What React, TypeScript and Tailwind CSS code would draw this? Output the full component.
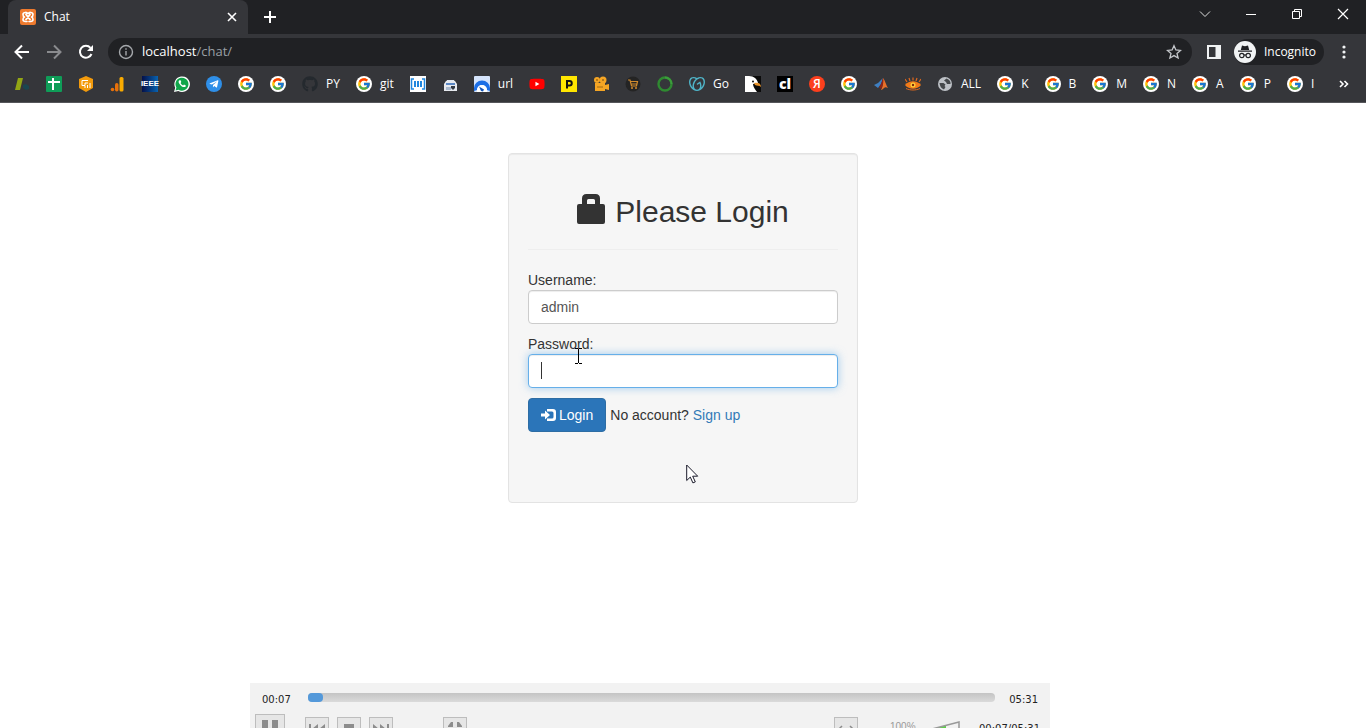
import React, { useState } from 'react'
import { FcGoogle } from 'react-icons/fc'
import { FaGithub, FaTelegramPlane, FaWhatsapp, FaYoutube } from 'react-icons/fa'
import { SiGodaddy } from 'react-icons/si'

function GoogleIcon() {
  return (
    <span className="flex size-4 items-center justify-center rounded-full bg-white">
      <FcGoogle className="size-3.5" />
    </span>
  )
}

function XamppIcon() {
  return (
    <svg viewBox="0 0 16 16" className="size-4">
      <rect width="16" height="16" rx="2" fill="#ee7a2e" />
      <g fill="none" stroke="#fff" strokeLinecap="round" strokeLinejoin="round">
        <path d="M5.500 3.500Q3 3.500 3 5.500T4.500 8Q3 8.500 3 10.500t2.500 2H7M10.500 3.500q2.500 0 2.500 2T11.500 8q1.500.5 1.500 2.500t-2.500 2H9" strokeWidth="1.600" />
        <path d="M6 5.500l4 5M10 5.500l-4 5M6 3.500q2 1.500 4 0" strokeWidth="1.800" />
      </g>
    </svg>
  )
}

function AdsIcon() {
  return (
    <svg viewBox="0 0 16 16" className="size-4">
      <path d="M4 2h5L6 14H1z" fill="#93a614" />
      <path d="M9 9l3-1 3 2v3l-3 1-3-2z" fill="#1b4650" />
    </svg>
  )
}

function SheetsIcon() {
  return (
    <svg viewBox="0 0 16 16" className="size-4">
      <rect width="16" height="16" rx="1" fill="#0f9d58" />
      <path d="M2 5h12v2H2zM6 2h2v12H6z" fill="#fff" />
    </svg>
  )
}

function HexIcon() {
  return (
    <svg viewBox="0 0 16 16" className="size-4">
      <path d="M8 0l7 3v9l-7 4-7-4V3z" fill="#f29a0c" />
      <path d="M10 4.500H4v5h3v-2.500h3M7 12v-2M9.500 12V9M12 12V7" fill="none" stroke="#fff" strokeWidth="1" />
    </svg>
  )
}

function AnalyticsIcon() {
  return (
    <svg viewBox="0 0 16 16" className="size-4">
      <circle cx="2.500" cy="13.500" r="1.800" fill="#e8710a" />
      <rect x="5" y="7" width="3.500" height="8.500" rx="1.700" fill="#e8710a" />
      <rect x="9.500" y="1" width="4" height="14.500" rx="1.500" fill="#f9ab00" />
    </svg>
  )
}

function IeeeIcon() {
  return (
    <span className="flex size-4 items-center justify-center bg-gradient-to-r from-[#04104a] to-[#0a63b0] font-['Liberation_Sans_Narrow','Liberation_Sans'] text-[8px] leading-none font-bold text-white">
      IEEE
    </span>
  )
}

function WhatsappIcon() {
  return (
    <svg viewBox="0 0 16 16" className="size-4">
      <path d="M0 16l1.200-4.200A7.800 7.800 0 1 1 4.300 15z" fill="#fff" />
      <path d="M1.500 14.500l.9-3A6.500 6.500 0 1 1 4.600 13.700z" fill="#10a64a" />
      <path d="M5.500 4.200c-1 .5-1.200 1.800-.3 3.300 1.400 2.500 3.500 3.800 5.300 3.600 1-.2 1.500-1 1.300-1.700L10 8.500l-.9 1C8 9 7 8 6.600 7l.7-.9-.7-1.900z" fill="#fff" />
    </svg>
  )
}

function TelegramIcon() {
  return (
    <span className="flex size-4 items-center justify-center rounded-full bg-[#2f8fe8]">
      <FaTelegramPlane className="size-2.5 text-white" />
    </span>
  )
}

function BarcodeIcon() {
  return (
    <svg viewBox="0 0 16 16" className="size-4">
      <rect width="16" height="16" fill="#fff" />
      <path d="M4 3H1.500v10H4M12 3h2.500v10H12" fill="none" stroke="#1f86de" strokeWidth="1.500" />
      <path d="M4 5h2v6H4zM7 5h2v6H7zM10 5h2v6h-2z" fill="#1f86de" />
    </svg>
  )
}

function PrinterIcon() {
  return (
    <svg viewBox="0 0 16 16" className="size-4">
      <path d="M5 6V4.500h7V6" fill="none" stroke="#dfe6ee" strokeWidth="1" />
      <path d="M4 5h9l2 3v7H2V8z" fill="#e6e9ee" />
      <path d="M4 7h9v2H4z" fill="#5a87c4" />
      <path d="M4 11h5v3H4z" fill="#a9b9cd" />
      <path d="M9 10h4v2l-2 2-2-2z" fill="#333a44" />
    </svg>
  )
}

function DialIcon() {
  return (
    <svg viewBox="0 0 16 16" className="size-4">
      <rect width="16" height="16" rx="1" fill="#d5e4fb" />
      <path d="M0 12a8 7.500 0 0 1 16 0v3l-3-1a5 5 0 0 0-10 0l-3 1z" fill="#1c6fe6" />
      <path d="M3 14a5 5 0 0 1 10 0v2H3z" fill="#fff" />
      <path d="M5 10.500l5 3-1 2-2-.5z" fill="#1556b8" />
    </svg>
  )
}

function YoutubeIcon() {
  return (
    <span className="relative flex size-4 items-center justify-center">
      <span className="absolute size-1.5 bg-white" />
      <FaYoutube className="relative size-4 text-[#f00]" />
    </span>
  )
}

function PIcon() {
  return (
    <svg viewBox="0 0 16 16" className="size-4">
      <rect width="16" height="16" fill="#ffe600" />
      <path d="M6 12.500V5h2.500a2 2 0 0 1 0 4.500H6" fill="none" stroke="#111" strokeWidth="2" />
    </svg>
  )
}

function CameraIcon() {
  return (
    <svg viewBox="0 0 16 16" className="size-4" fill="#f5a524">
      <circle cx="4" cy="4" r="3" />
      <circle cx="10" cy="4" r="3.500" />
      <path d="M2 7h10v2l4-1v6l-4-1v2H2z" />
      <circle cx="4" cy="4" r="1" fill="#a06a15" />
      <circle cx="10" cy="4" r="1" fill="#a06a15" />
      <path d="M4 11h6" stroke="#a06a15" />
    </svg>
  )
}

function CartIcon() {
  return (
    <svg viewBox="0 0 16 16" className="size-4">
      <circle cx="8" cy="8" r="7.500" fill="#242424" />
      <path d="M3 4h2l1.500 6h5l1-4.500H5.500M6 8h6" fill="none" stroke="#d08a2c" strokeWidth="1.200" />
      <circle cx="7" cy="12" r="1" fill="#d08a2c" />
      <circle cx="11" cy="12" r="1" fill="#d08a2c" />
    </svg>
  )
}

function RingIcon() {
  return (
    <svg viewBox="0 0 16 16" className="size-4">
      <circle cx="8" cy="8" r="6.500" fill="none" stroke="#2f8a31" strokeWidth="2.400" />
      <path d="M8 1.500a6.500 6.500 0 0 1 6.500 6.500" fill="none" stroke="#3c9d3c" strokeWidth="2" />
    </svg>
  )
}

function EagleIcon() {
  return (
    <svg viewBox="0 0 16 16" className="size-4">
      <rect width="16" height="16" fill="#0b0b0b" />
      <path d="M0 0h4c5 0 8 3 9 7l-5 1c0 3 2 5 4 8H0z" fill="#fff" />
      <path d="M9 7c4-1 7 0 7 4-2-2-4-1-6-2z" fill="#e8932b" />
      <circle cx="8" cy="5.500" r="1" fill="#111" />
    </svg>
  )
}

function ClIcon() {
  return (
    <span className="flex size-4 items-center justify-center bg-black font-['Open_Sans'] text-[14px] leading-none font-extrabold text-white">
      cl
    </span>
  )
}

function YandexIcon() {
  return (
    <span className="flex size-4 items-center justify-center rounded-full bg-[#fc3f1d] font-['Open_Sans'] text-xs leading-none font-semibold text-white">
      Я
    </span>
  )
}

function MatlabIcon() {
  return (
    <svg viewBox="0 0 16 16" className="size-4">
      <path d="M1 9l4-2 3-3 2-2-2 6-3 4z" fill="#3f7fc0" />
      <path d="M10 2c2 2 3 7 5 10-2-1-3-1-4 0-2 2-3 2-3 2 2-3 2-8 2-12z" fill="#e8702a" />
      <path d="M10 2c1 3 0 8-2 11l-2-2c2-2 3-6 4-9z" fill="#8e2517" />
    </svg>
  )
}

function EyeIcon() {
  return (
    <svg viewBox="0 0 16 16" className="size-4">
      <path d="M0 9c4-5 12-5 16 0-4 5-12 5-16 0z" fill="#f27a18" />
      <path d="M2 6L0 3M5 5L4 2M8 4.500V1.500M11 5l1-3M14 6l2-3" stroke="#e0691e" strokeWidth="1.200" />
      <circle cx="8" cy="9" r="2.500" fill="#ffd23c" />
      <circle cx="8" cy="9" r="1.200" fill="#7a2610" />
      <path d="M1 12.500c4 2 10 2 14 0" fill="none" stroke="#e0691e" />
    </svg>
  )
}

function GlobeIcon() {
  return (
    <svg viewBox="0 0 16 16" className="size-4">
      <circle cx="8" cy="8" r="7" fill="#bdc1c6" />
      <path d="M2.500 7h4l2 1.500-1 1.500 1 1-1.500 2.500q-4-1.500-4.500-6.500zM9.500 2.500L7 4.500l2 1.500 1 2h3.500q.5-4-4-5.500z" fill="#45484b" />
    </svg>
  )
}

const bookmarks: { icon: React.ReactNode; label?: string; name?: string }[] = [
  { icon: <AdsIcon />, name: 'Ads' },
  { icon: <SheetsIcon />, name: 'Sheets' },
  { icon: <HexIcon />, name: 'Dashboard' },
  { icon: <AnalyticsIcon />, name: 'Analytics' },
  { icon: <IeeeIcon />, name: 'IEEE' },
  { icon: <WhatsappIcon />, name: 'WhatsApp' },
  { icon: <TelegramIcon />, name: 'Telegram' },
  { icon: <GoogleIcon />, name: 'Google' },
  { icon: <GoogleIcon />, name: 'Google' },
  { icon: <FaGithub className="size-4 text-[#24292e]" />, label: 'PY' },
  { icon: <GoogleIcon />, label: 'git' },
  { icon: <BarcodeIcon />, name: 'Barcode' },
  { icon: <PrinterIcon />, name: 'Printer' },
  { icon: <DialIcon />, label: 'url' },
  { icon: <YoutubeIcon />, name: 'YouTube' },
  { icon: <PIcon />, name: 'P' },
  { icon: <CameraIcon />, name: 'Camera' },
  { icon: <CartIcon />, name: 'Cart' },
  { icon: <RingIcon />, name: 'Ring' },
  { icon: <SiGodaddy className="size-4 text-[#4fb4c8]" />, label: 'Go' },
  { icon: <EagleIcon />, name: 'Eagle' },
  { icon: <ClIcon />, name: 'cl' },
  { icon: <YandexIcon />, name: 'Yandex' },
  { icon: <GoogleIcon />, name: 'Google' },
  { icon: <MatlabIcon />, name: 'Matlab' },
  { icon: <EyeIcon />, name: 'Eye' },
  { icon: <GlobeIcon />, label: 'ALL' },
  { icon: <GoogleIcon />, label: 'K' },
  { icon: <GoogleIcon />, label: 'B' },
  { icon: <GoogleIcon />, label: 'M' },
  { icon: <GoogleIcon />, label: 'N' },
  { icon: <GoogleIcon />, label: 'A' },
  { icon: <GoogleIcon />, label: 'P' },
  { icon: <GoogleIcon />, label: 'I' },
]

function TabStrip() {
  return (
    <div className="flex h-[34px] bg-[#202124] pl-2">
      <div className="flex w-60 items-center rounded-t-lg bg-[#35363a] px-3">
        <XamppIcon />
        <span className="ml-2 flex-1 text-xs">Chat</span>
        <button aria-label="Close tab" className="-mr-1 flex size-4 items-center justify-center">
          <svg viewBox="0 0 16 16" className="size-4" stroke="currentColor" strokeWidth="1.600">
            <path d="M4 4l8 8M12 4l-8 8" />
          </svg>
        </button>
      </div>
      <button aria-label="New tab" className="flex w-11 items-center justify-center">
        <svg viewBox="0 0 12 12" className="size-3" stroke="#fff" strokeWidth="2">
          <path d="M6 0v12M0 6h12" />
        </svg>
      </button>
      <div className="ml-auto flex h-7">
        <button aria-label="Search tabs" className="flex w-[46px] items-center justify-center">
          <svg viewBox="0 0 12 12" className="size-3" fill="none" stroke="#ddd">
            <path d="M1 3.500l5 5 5-5" />
          </svg>
        </button>
        <button aria-label="Minimize" className="flex w-[46px] items-center justify-center">
          <svg viewBox="0 0 12 12" className="size-3" stroke="#fff">
            <path d="M1 6.500h10" />
          </svg>
        </button>
        <button aria-label="Restore" className="flex w-[46px] items-center justify-center">
          <svg viewBox="0 0 12 12" className="size-3" fill="none" stroke="#fff">
            <path d="M1.500 3.500h7v7h-7zM3.500 3.500v-2h7v7h-2" />
          </svg>
        </button>
        <button aria-label="Close" className="flex w-[46px] items-center justify-center">
          <svg viewBox="0 0 12 12" className="size-3" stroke="#fff" strokeWidth="1.200">
            <path d="M1 1l10 10M11 1L1 11" />
          </svg>
        </button>
      </div>
    </div>
  )
}

function Toolbar() {
  return (
    <div className="flex h-9 items-center px-3.5">
      <div className="flex gap-4">
        <button aria-label="Back">
          <svg viewBox="0 0 16 16" className="size-4" fill="none" stroke="#fff" strokeWidth="2">
            <path d="M15 8H2M8 1.500L1.500 8 8 14.500" />
          </svg>
        </button>
        <button aria-label="Forward">
          <svg viewBox="0 0 16 16" className="size-4" fill="none" stroke="#8a8b8e" strokeWidth="2">
            <path d="M1 8h13M8 1.500L14.500 8 8 14.500" />
          </svg>
        </button>
        <button aria-label="Reload">
          <svg viewBox="0 0 16 16" className="size-4" fill="none" stroke="#fff" strokeWidth="2">
            <path d="M13.500 10a6 6 0 1 1-1-6.200" />
            <path d="M15 1v6H9z" fill="#fff" stroke="none" />
          </svg>
        </button>
      </div>
      <div className="ml-3.5 flex h-7 flex-1 items-center rounded-full bg-[#202124] px-2.5">
        <svg viewBox="0 0 16 16" className="size-4" fill="none" stroke="#a5a8ac" strokeWidth="1.400">
          <circle cx="8" cy="8" r="6.500" />
          <path d="M8 7v4.500M8 4.200v1.500" />
        </svg>
        <span className="ml-2 flex-1 text-[13px] text-[#9aa0a6]">
          <span className="text-white">localhost</span>/chat/
        </span>
        <button aria-label="Bookmark this page">
          <svg viewBox="0 0 16 16" className="size-4" fill="none" stroke="#c4c7cb" strokeWidth="1.300">
            <path d="M8 1.700l1.900 4.300 4.600.4-3.500 3 1.100 4.600L8 11.600 3.900 14 5 9.400l-3.500-3 4.600-.4z" />
          </svg>
        </button>
      </div>
      <button aria-label="Side panel" className="ml-3.5">
        <svg viewBox="0 0 16 16" className="size-4">
          <path d="M1 1h14v14H1z" fill="#f1f3f4" />
          <path d="M3 3h6.500v10H3z" fill="#35363a" />
        </svg>
      </button>
      <button className="ml-3 flex h-[26px] items-center gap-2 rounded-full bg-[#202124] pr-2 text-xs">
        <svg viewBox="0 0 22 22" className="size-[22px]">
          <circle cx="11" cy="11" r="11" fill="#f1f3f4" />
          <path d="M8 4.500l3 .7 3-.7 1.200 4.500H6.800zM4 9.500h14v1.200H4z" fill="#202124" />
          <g fill="none" stroke="#202124" strokeWidth="1.200">
            <circle cx="7.800" cy="14.500" r="2.200" />
            <circle cx="14.200" cy="14.500" r="2.200" />
            <path d="M10 14.200q1-.8 2 0" />
          </g>
        </svg>
        Incognito
      </button>
      <button aria-label="Menu" className="ml-3">
        <svg viewBox="0 0 16 16" className="size-4" fill="#f1f3f4">
          <circle cx="8" cy="3" r="1.600" />
          <circle cx="8" cy="8" r="1.600" />
          <circle cx="8" cy="13" r="1.600" />
        </svg>
      </button>
    </div>
  )
}

function BookmarksBar() {
  return (
    <div className="flex h-[33px] items-center gap-4 border-b border-[#55565a] px-4 pb-1 pl-3.5 text-xs">
      {bookmarks.map((b, i) => (
        <a key={i} href="#" aria-label={b.label ?? b.name} className="flex shrink-0 items-center gap-2">
          {b.icon}
          {b.label && <span>{b.label}</span>}
        </a>
      ))}
      <button aria-label="More bookmarks" className="ml-auto">
        <svg viewBox="0 0 12 12" className="size-3" fill="none" stroke="#fff" strokeWidth="1.600">
          <path d="M2 3l3 3-3 3M6.500 3l3 3-3 3" />
        </svg>
      </button>
    </div>
  )
}

function LoginCard() {
  const [username, setUsername] = useState('admin')
  const [password, setPassword] = useState('')

  return (
    <form
      onSubmit={(e) => e.preventDefault()}
      className="relative mx-auto mt-[50px] h-[350px] w-[350px] rounded-sm border border-[#e3e3e3] bg-[#f6f6f6] p-[19px] text-sm leading-5 text-[#333] shadow-[inset_0_1px_1px_rgba(0,0,0,0.05)]"
    >
      <h2 className="mt-[21px] flex h-9 items-center justify-center gap-2.5 text-[30px] leading-9">
        <svg viewBox="0 0 28 30" className="mb-1.5 h-[30px] w-7" fill="#333">
          <path d="M2 10h3V4.500Q5 0 9.500 0h9Q23 0 23 4.500V10h3q2 0 2 2v16q0 2-2 2H2q-2 0-2-2V12q0-2 2-2zm8 0h8V6.500Q18 5 16.500 5h-5Q10 5 10 6.500z" />
        </svg>
        Please Login
      </h2>
      <hr className="mt-[19px] mb-5 border-[#eee]" />

      <label htmlFor="username" className="block">Username:</label>
      <input
        id="username"
        value={username}
        onChange={(e) => setUsername(e.target.value)}
        className="block h-[34px] w-full rounded-sm border border-[#ccc] bg-white px-3 text-[#555] shadow-[inset_0_1px_1px_rgba(0,0,0,0.075)] outline-none"
      />

      <label htmlFor="password" className="mt-2.5 block">Password:</label>
      <div className="relative">
        <input
          id="password"
          type="password"
          value={password}
          onChange={(e) => setPassword(e.target.value)}
          className="block h-[34px] w-full rounded-sm border border-[#66afe9] bg-white px-3 text-[#555] caret-transparent shadow-[inset_0_1px_1px_rgba(0,0,0,0.075),0_0_8px_rgba(102,175,233,0.6)] outline-none"
        />
        <span className="absolute top-2 left-[13px] h-[17px] w-px bg-[#333]" />
        <svg viewBox="0 0 9 18" className="absolute -top-1.5 left-[46px] h-[18px] w-[9px]" fill="none" stroke="#000">
          <path d="M1 .5h3M5 .5h3M4.500 1v14M1 15.500h3M5 15.500h3" />
        </svg>
      </div>

      <div className="mt-2.5 flex items-center gap-1">
        <button className="flex h-[34px] items-center gap-[3px] rounded-sm border border-[#2e6da4] bg-[#2b75b9] px-3 text-white">
          <svg viewBox="0 0 15 14" className="h-3.5 w-[15px]" fill="#fff">
            <path d="M0 5.500h4V2.500L9 7l-5 4.500v-3H0zM6 1h6q3 0 3 3v6q0 3-3 3H6v-2.500h5q1.500 0 1.500-1.500V5q0-1.500-1.500-1.500H6z" />
          </svg>
          Login
        </button>
        <span>
          No account? <a href="#" className="text-[#337ab7]">Sign up</a>
        </span>
      </div>

      <svg viewBox="0 0 13 20" className="absolute top-[310px] left-[177px] h-5 w-[13px]" fill="#fff" stroke="#1a1a2a">
        <path d="M.7 1v15.500l3.600-3.400 2.600 5.800 2.400-1-2.600-5.700h5z" />
      </svg>
    </form>
  )
}

const playerButton = 'flex h-6 w-6 items-center justify-center border border-[#bdbdbd] bg-[#e6e6e6]'

function Player() {
  return (
    <div className="ml-[250px] h-[45px] w-[800px] shrink-0 overflow-hidden bg-[#f2f2f2] font-['DejaVu_Sans'] text-[10px] leading-4 text-[#222]">
      <div className="flex h-[31px] items-center px-3 pt-0.5">
        <span className="w-[46px]">00:07</span>
        <div className="mb-1 h-[9px] flex-1 rounded-sm bg-gradient-to-b from-[#c4c4c4] to-[#dadada]">
          <div className="h-full w-[15px] rounded-sm bg-[#5499da]" />
        </div>
        <span className="w-[43px] text-right">05:31</span>
      </div>
      <div className="flex items-start pr-2.5 pl-[5px]">
        <button aria-label="Pause" className="flex h-[30px] w-[30px] items-start justify-center border border-[#bdbdbd] bg-[#e6e6e6] pt-[5px]">
          <svg viewBox="0 0 16 18" className="h-[18px] w-4" fill="#8c8c8c">
            <path d="M0 0h6v18H0zM10 0h6v18h-6z" />
          </svg>
        </button>
        <div className="mt-[3px] ml-5 flex gap-2">
          <button aria-label="Previous" className={playerButton}>
            <svg viewBox="0 0 16 10" className="h-2.5 w-4" fill="#8c8c8c">
              <path d="M0 0h2v10H0zM9 0v10L3 5zM16 0v10l-6-5z" />
            </svg>
          </button>
          <button aria-label="Stop" className={playerButton}>
            <svg viewBox="0 0 10 10" className="size-2.5" fill="#8c8c8c">
              <path d="M0 0h10v10H0z" />
            </svg>
          </button>
          <button aria-label="Next" className={playerButton}>
            <svg viewBox="0 0 16 10" className="h-2.5 w-4" fill="#8c8c8c">
              <path d="M14 0h2v10h-2zM7 0v10l6-5zM0 0v10l6-5z" />
            </svg>
          </button>
        </div>
        <button aria-label="Exit full screen" className="mt-[3px] ml-[50px] flex h-6 w-6 items-center justify-center border border-[#bdbdbd] bg-[#e6e6e6]">
          <svg viewBox="0 0 14 14" className="size-3.5" fill="#8c8c8c">
            <path d="M3 0h2v5H0V4zM9 0h2l3 4v1H9zM0 9h5v5H3zM9 9h5l-3 5H9z" />
          </svg>
        </button>
        <div className="mt-[3px] ml-auto flex items-start">
          <button aria-label="Fit width" className={playerButton}>
            <svg viewBox="0 0 16 8" className="h-2 w-4" fill="none" stroke="#8c8c8c" strokeWidth="1.500">
              <path d="M4 1L1 4l3 3M12 1l3 3-3 3M1 4h14" />
            </svg>
          </button>
          <span className="mt-0.5 ml-8 w-10 font-['Liberation_Sans'] text-[#999]">100%</span>
          <svg viewBox="0 0 30 12" className="mt-1 h-3 w-[30px]">
            <path d="M0 8.500L16 4.500V12H0z" fill="#5fd04a" />
            <path d="M0 8.500L29 1v11" fill="none" stroke="#999" strokeWidth="1.500" />
          </svg>
          <span className="mt-1 w-20 text-right">00:07/05:31</span>
        </div>
      </div>
    </div>
  )
}

export default function App() {
  return (
    <div className="flex h-screen flex-col overflow-hidden bg-white font-['Liberation_Sans',sans-serif]">
      <header className="shrink-0 bg-[#35363a] font-['Open_Sans',sans-serif] text-white">
        <TabStrip />
        <Toolbar />
        <BookmarksBar />
      </header>
      <main className="min-h-0 flex-1">
        <LoginCard />
      </main>
      <Player />
    </div>
  )
}
